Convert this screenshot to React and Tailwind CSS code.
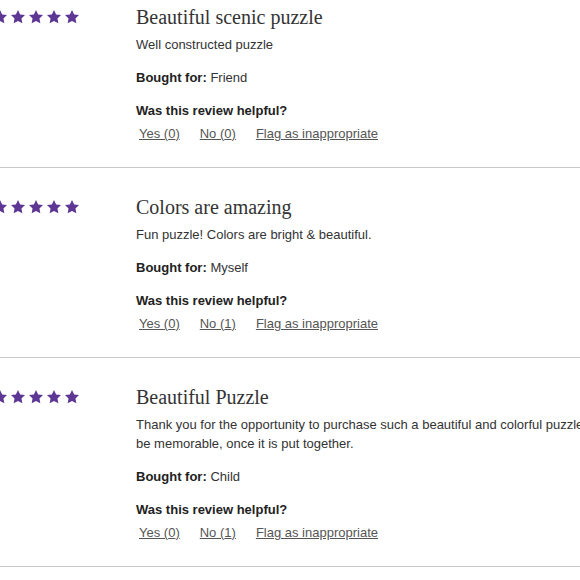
const REVIEWS = [
  {
    id: 1,
    title: 'Beautiful scenic puzzle',
    body: 'Well constructed puzzle',
    boughtFor: 'Friend',
    yes: 0,
    no: 0,
  },
  {
    id: 2,
    title: 'Colors are amazing',
    body: 'Fun puzzle! Colors are bright & beautiful.',
    boughtFor: 'Myself',
    yes: 0,
    no: 1,
  },
  {
    id: 3,
    title: 'Beautiful Puzzle',
    body: 'Thank you for the opportunity to purchase such a beautiful and colorful puzzle. It will be memorable, once it is put together.',
    boughtFor: 'Child',
    yes: 0,
    no: 1,
  },
]

function Star() {
  return (
    <svg viewBox="0 0 24 24" className="w-4 h-4 shrink-0" fill="#5e3795">
      <polygon points="12,1.5 15.2,8.1 22.5,9.1 17.2,14.2 18.5,21.5 12,18 5.5,21.5 6.8,14.2 1.5,9.1 8.8,8.1" />
    </svg>
  )
}

function Review({ review, first }) {
  return (
    <div className={first ? 'flex pt-[3px] pb-[24px]' : 'flex pt-[25px] pb-[24px] border-t border-[#c8c8c8]'}>
      <div className="w-[136px] shrink-0">
        <div className="h-[28px] flex items-center gap-[2px] -ml-2">
          <Star />
          <Star />
          <Star />
          <Star />
          <Star />
        </div>
      </div>
      <div className="flex-1 min-w-0 text-[13px] text-[#333]" style={{ fontFamily: '"Liberation Sans", Arial, sans-serif' }}>
        <h3 className="text-[20px] leading-[28px] text-[#333] whitespace-nowrap" style={{ fontFamily: '"Liberation Serif", "Times New Roman", serif' }}>
          {review.title}
        </h3>
        <p className="mt-1 leading-[19px] w-[492px]">{review.body}</p>
        <p className="mt-[14px] leading-[19px]">
          <span className="font-bold text-[#222]">Bought for:</span> {review.boughtFor}
        </p>
        <p className="mt-[14px] leading-[19px] font-bold text-[#222]">Was this review helpful?</p>
        <div className="mt-1 leading-[19px] flex gap-5 ml-[3px] text-[#555]">
          <a href="#" className="underline">Yes ({review.yes})</a>
          <a href="#" className="underline">No ({review.no})</a>
          <a href="#" className="underline">Flag as inappropriate</a>
        </div>
      </div>
    </div>
  )
}

export default function App() {
  return (
    <div className="w-[580px] h-[580px] overflow-hidden bg-white">
      {REVIEWS.map((r, i) => (
        <Review key={r.id} review={r} first={i === 0} />
      ))}
      <div className="border-t border-[#c8c8c8]" />
    </div>
  )
}
